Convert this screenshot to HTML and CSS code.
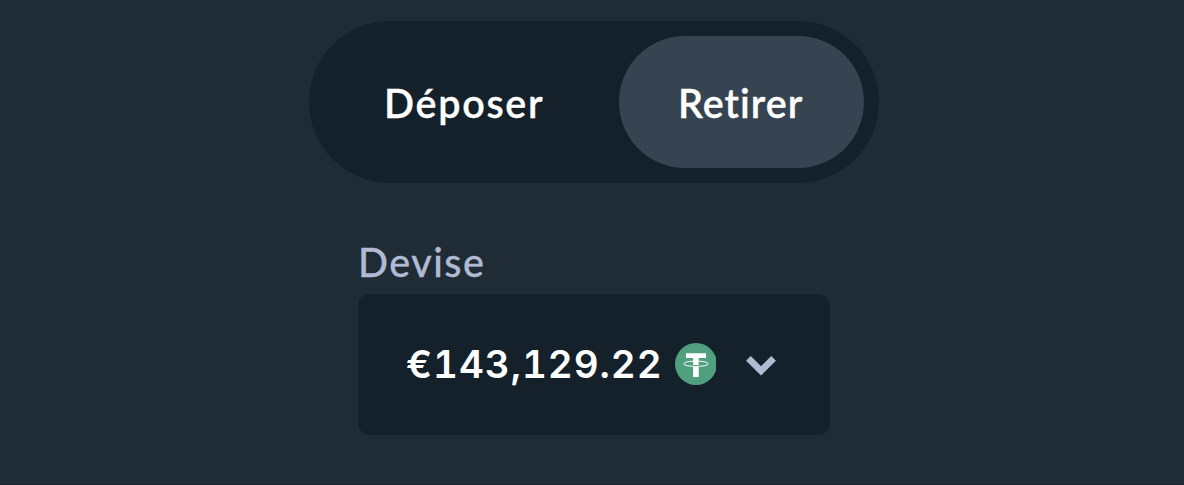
FILE: index.html
```
<!DOCTYPE html>
<html lang="fr">
<head>
    <meta charset="UTF-8">
    <meta name="viewport" content="width=device-width, initial-scale=1.0">
    <title>Retirer</title>
    <link rel="stylesheet" href="styles.css">
</head>
<body>
    <div class="tabs">
        <button class="tab tab-deposer"><span>Déposer</span></button>
        <button class="tab tab-retirer active"><span>Retirer</span></button>
    </div>
    <div class="field">
        <div class="label">Devise</div>
        <button class="select">
            <span class="amount">€143,129.22</span>
            <svg class="coin" viewBox="0 0 41 42">
                <circle cx="21" cy="21" r="21" fill="#50a07f"/>
                <path d="M11 10.3h20v4.6h-7.3v7.2h-5.6v-7.2H11zM18.1 23.8h5.6v10.1h-5.6z" fill="#fff"/>
                <path d="M18.1 18.2C12.5 18.4 8.8 19.5 8.8 20.8C8.8 22.3 14.2 23.4 21 23.4S33.2 22.3 33.2 20.8C33.2 19.5 29.3 18.4 23.7 18.2" fill="none" stroke="#fff" stroke-width="1"/>
            </svg>
            <svg class="chevron" viewBox="0 0 30 20">
                <path d="M2.4 2.3L15 14.9L27.6 2.3" fill="none" stroke="#b1bad3" stroke-width="6.6"/>
            </svg>
        </button>
    </div>
</body>
</html>
```

FILE: styles.css
```
* {
    box-sizing: border-box;
}
body {
    margin: 0;
    height: 485px;
    padding-top: 21px;
    overflow: hidden;
    background-color: #1f2c36;
    border-bottom: 1px solid #1c2333;
    font-family: Lato, sans-serif;
    color: white;
}
button {
    border: none;
    padding: 0;
    background: none;
    color: white;
    font-family: inherit;
    cursor: pointer;
}
.tabs {
    display: flex;
    width: 570px;
    height: 162px;
    margin-left: 309px;
    padding: 15px;
    border-radius: 81px;
    background-color: #14212b;
}
.tab {
    height: 132px;
    padding-top: 1px;
    border-radius: 66px;
    font-size: 39.5px;
    font-weight: 600;
    line-height: 48px;
    text-align: left;
    -webkit-text-stroke: 0.3px;
}
.tab-deposer {
    width: 295px;
    padding-left: 60px;
    letter-spacing: 1.7px;
}
.tab-retirer {
    width: 245px;
    padding-left: 59px;
    letter-spacing: 1px;
}
.active {
    background-color: #354450;
}
.field {
    width: 472px;
    margin: 54px 0 0 358px;
}
.label {
    height: 57px;
    padding-top: 1px;
    color: #b1bad3;
    font-size: 39.5px;
    font-weight: 500;
    line-height: 48px;
    letter-spacing: 1.5px;
    -webkit-text-stroke: 0.3px;
}
.select {
    display: flex;
    align-items: center;
    width: 472px;
    height: 141px;
    padding: 0 0 1px 48px;
    border-radius: 12px;
    background-color: #14212b;
}
.amount {
    width: 269px;
    font-family: Inter, sans-serif;
    font-size: 38.5px;
    font-weight: 600;
    font-variant-numeric: tabular-nums;
    line-height: 48px;
    letter-spacing: 0.95px;
    text-align: left;
    white-space: nowrap;
}
.coin {
    width: 41px;
    height: 42px;
}
.chevron {
    width: 30px;
    height: 20px;
    margin: 3px 0 0 30px;
}
```
